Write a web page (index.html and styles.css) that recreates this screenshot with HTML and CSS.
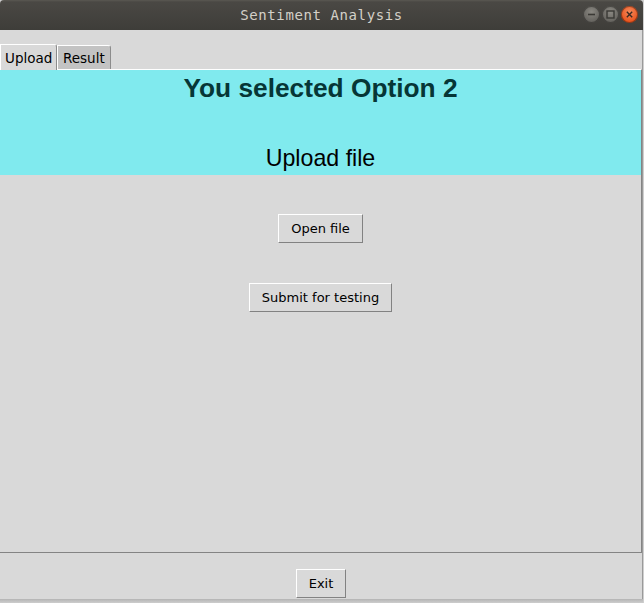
FILE: index.html
```html
<!DOCTYPE html>
<html>
<head>
<meta charset="utf-8">
<title>Sentiment Analysis</title>
<link rel="stylesheet" href="styles.css">
</head>
<body>
<div class="window">
  <div class="titlebar">
    <span class="title">Sentiment Analysis</span>
    <div class="controls">
      <span class="ctl ctl-min"><svg width="17" height="17" viewBox="0 0 17 17"><line x1="5" y1="8.5" x2="12" y2="8.5" stroke="#3a3935" stroke-width="1.6"/></svg></span>
      <span class="ctl ctl-max"><svg width="17" height="17" viewBox="0 0 17 17"><rect x="5" y="5" width="7" height="7" fill="none" stroke="#3a3935" stroke-width="1.4"/></svg></span>
      <span class="ctl ctl-close"><svg width="17" height="17" viewBox="0 0 17 17"><path d="M5.8 5.8 L11.2 11.2 M11.2 5.8 L5.8 11.2" stroke="#3a2a22" stroke-width="1.4"/></svg></span>
    </div>
  </div>
  <div class="client">
    <div class="tabs">
      <div class="tab tab-active">Upload</div>
      <div class="tab">Result</div>
    </div>
    <div class="pane">
      <div class="banner">
        <div class="banner-title">You selected Option 2</div>
        <div class="banner-sub">Upload file</div>
      </div>
      <div class="actions">
        <button class="tkbtn btn-open">Open file</button>
        <button class="tkbtn btn-submit">Submit for testing</button>
      </div>
    </div>
    <div class="footer">
      <button class="tkbtn">Exit</button>
    </div>
  </div>
  <div class="shadow"></div>
</div>
</body>
</html>
```

FILE: styles.css
```css
html, body {
  margin: 0;
  padding: 0;
}
body {
  width: 644px;
  height: 603px;
  overflow: hidden;
  background: #cfcfcf;
  font-family: "DejaVu Sans", sans-serif;
}
.window {
  width: 643px;
  height: 603px;
  display: flex;
  flex-direction: column;
}
.titlebar {
  height: 30px;
  flex: none;
  background: linear-gradient(#5a5852 0, #4a4844 2px, #3e3d39 100%);
  display: flex;
  align-items: center;
  justify-content: center;
  position: relative;
  border-radius: 4px 4px 0 0;
}
.title {
  font-family: "DejaVu Sans Mono", monospace;
  font-size: 14px;
  letter-spacing: 0.6px;
  color: #d4d0c8;
  margin-left: 0;
}
.controls {
  position: absolute;
  right: 5px;
  top: 6px;
  display: flex;
  gap: 2px;
}
.ctl {
  width: 17px;
  height: 17px;
  border-radius: 50%;
  display: flex;
  box-shadow: inset 0 0 0 1px rgba(0,0,0,0.35);
}
.ctl-min, .ctl-max {
  background: radial-gradient(circle at 50% 35%, #8a8882, #65635e 70%);
}
.ctl-close {
  background: radial-gradient(circle at 50% 35%, #f48a5c, #e9541e 70%);
}
.client {
  flex: 1;
  display: flex;
  flex-direction: column;
  background: #d9d9d9;
  border-right: 1px solid #9a9a9a;
}
.tabs {
  height: 39px;
  flex: none;
  display: flex;
  align-items: flex-end;
  box-sizing: border-box;
}
.tab {
  font-size: 13.5px;
  color: #000;
  height: 24px;
  box-sizing: border-box;
  padding: 3px 5px 0 5px;
  background: #c3c3c3;
  border-top: 1px solid #fff;
  border-left: 1px solid #fff;
  border-right: 1px solid #8c8c8c;
  border-radius: 0 3px 0 0;
  line-height: 18px;
}
.tab-active {
  background: #d9d9d9;
  height: 26px;
  margin-bottom: -1px;
  padding: 4px 3px 0 4px;
  position: relative;
  z-index: 1;
  width: 57px;
}
.pane {
  height: 484px;
  flex: none;
  box-sizing: border-box;
  border-top: 1px solid #fff;
  border-bottom: 1px solid #848484;
  border-right: 1px solid #848484;
  display: flex;
  flex-direction: column;
}
.banner {
  height: 105px;
  flex: none;
  background: #80eaee;
  display: flex;
  flex-direction: column;
  align-items: center;
  font-family: "Liberation Sans", Arial, sans-serif;
}
.banner-title {
  font-size: 26.3px;
  font-weight: bold;
  line-height: 30px;
  color: #063636;
  margin-top: 3px;
}
.banner-sub {
  font-size: 23.2px;
  line-height: 26px;
  color: #000;
  margin-top: 42px;
}
.actions {
  display: flex;
  flex-direction: column;
  align-items: center;
}
.tkbtn {
  font-family: "DejaVu Sans", sans-serif;
  font-size: 13px;
  color: #000;
  background: #d9d9d9;
  height: 29px;
  padding: 0 12px;
  border: 1px solid;
  border-color: #fff #828282 #828282 #fff;
  border-radius: 0;
  margin: 0;
}
.btn-open {
  margin-top: 39px;
}
.btn-submit {
  margin-top: 40px;
}
.footer {
  flex: 1;
  display: flex;
  justify-content: center;
  padding-top: 16px;
}
.shadow {
  height: 4px;
  flex: none;
  background: linear-gradient(#b4b4b4, #cdcdcd);
}
```
